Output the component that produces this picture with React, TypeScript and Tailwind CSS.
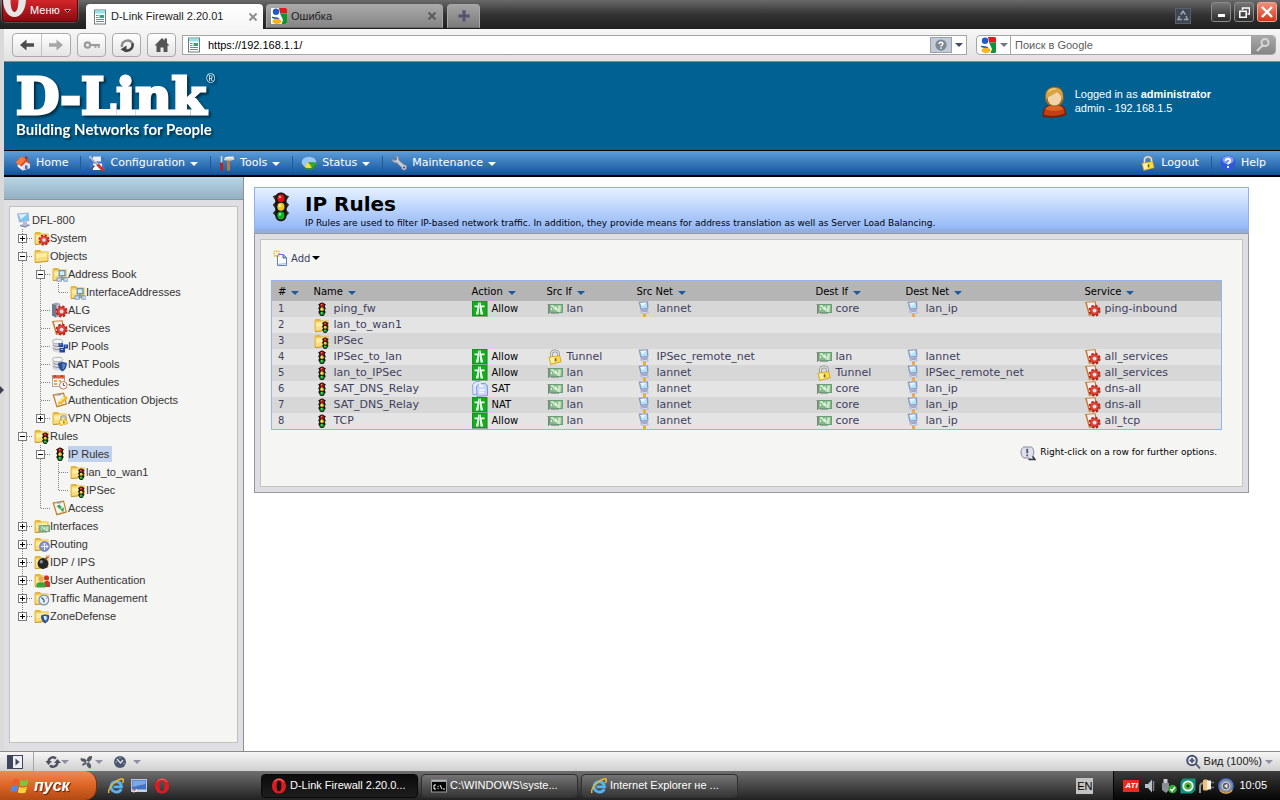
import type { ReactNode } from "react"

interface IconProps {
  className?: string;
  size?: number;
  children?: ReactNode;
}

const Icon = ({ className = "", size = 16, children }: IconProps) => (
  <svg className={`shrink-0 ${className}`} width={size} height={size} viewBox="0 0 16 16" fill="none" aria-hidden="true">
    {children}
  </svg>
)

/* ---- shapes shared by several icons ---- */

const FolderShape = () => (
  <>
    <path d="M0.5 3.5L1.5 2H6L7.5 3.5H14.5V13L2 15L0.5 14Z" fill="#e3b640" />
    <path d="M1.5 4.5L13.8 4L13.2 13L1.8 14.4Z" fill="#f9dc7c" />
    <path d="M2.5 6L13 5.2L12.8 8.5L2.4 10Z" fill="#fdeea6" />
    <path d="M1 14.6L14 13.2" stroke="#c4952c" strokeWidth="1" />
  </>
)

const GearShape = ({ transform = "" }: { transform?: string }) => (
  <g transform={transform}>
    <circle cx="8" cy="8" r="6.2" stroke="#b5241e" strokeWidth="2.6" strokeDasharray="2.9 1.97" />
    <circle cx="8" cy="8" r="5.8" fill="#c82a23" />
    <circle cx="7.6" cy="7.6" r="4.6" fill="#e0483d" />
    <circle cx="8" cy="8" r="2.4" fill="#dfe3f4" />
  </g>
)

const TrafficShape = ({ transform = "" }: { transform?: string }) => (
  <g transform={transform}>
    <path d="M5 1.5L3 2.2L5 5L3 6.8L5 9.6L3 11.4L5.5 14H10.5L13 11.4L11 9.6L13 6.8L11 5L13 2.2L11 1.5Z" fill="#33301f" />
    <rect x="4.6" y="0" width="6.8" height="16" rx="3" fill="#141410" />
    <circle cx="8" cy="3.2" r="2.2" fill="#cf1519" />
    <circle cx="8" cy="8" r="2.2" fill="#f2c328" />
    <circle cx="8" cy="12.8" r="2.2" fill="#10ad2a" />
    <circle cx="7.4" cy="2.6" r="0.8" fill="#ff8f8a" />
    <circle cx="7.4" cy="7.4" r="0.8" fill="#fff2a8" />
    <circle cx="7.4" cy="12.2" r="0.8" fill="#7df08c" />
  </g>
)

const LockShape = ({ transform = "" }: { transform?: string }) => (
  <g transform={transform}>
    <path d="M4.5 8V5C4.5 1 11.5 0.5 11.5 5V8" stroke="#8f8f8f" strokeWidth="2.8" />
    <path d="M4.5 8V5C4.5 1 11.5 0.5 11.5 5V8" stroke="#e4e4e0" strokeWidth="1.3" />
    <path d="M1.5 8L13 6.3L14.5 13L3.5 16Z" fill="#cf9c18" />
    <path d="M2.3 8.4L12.4 6.9L13.6 12.5L4.1 15Z" fill="#f7dc4b" />
    <path d="M3 9L8 8.3L8.8 13.2L4.5 14.2Z" fill="#fff3a0" />
    <path d="M8.5 9.3V12.4" stroke="#7c5a10" strokeWidth="1.6" />
  </g>
)

const ShieldShape = ({ transform = "" }: { transform?: string }) => (
  <g transform={transform}>
    <path d="M8 1L14.5 3C14.5 9 12.5 13 8 15.5C3.5 13 1.5 9 1.5 3Z" fill="#2a4f8f" />
    <path d="M8 3L12 4.5C12 9 11 11 8 13Z" fill="#5e8cd0" />
  </g>
)

const NicShape = ({ transform = "" }: { transform?: string }) => (
  <g transform={transform}>
    <path d="M0.5 3.5H1.5V13" stroke="#7f837f" strokeWidth="1" />
    <rect x="2" y="3" width="14" height="9" fill="#86b98d" />
    <rect x="2.5" y="3.5" width="13" height="8" stroke="#6a9f77" strokeWidth="1" />
    <path d="M4 5H6L8 8L9 5.5L9.5 9.5M4.5 7V9M11 5.5H13V8H11V10H13.5" stroke="#e0f4dc" strokeWidth="1.3" />
    <path d="M4 12.5H12" stroke="#9aa79c" strokeWidth="1" />
  </g>
)

const NetShape = ({ transform = "" }: { transform?: string }) => (
  <g transform={transform}>
    <rect x="3" y="1" width="8" height="7" fill="#d4ecfc" stroke="#5279b8" strokeWidth="1.4" />
    <path d="M7 8V11M3 13V11H12V13" stroke="#6a7fae" strokeWidth="1.4" />
    <rect x="0" y="11" width="6" height="4.5" fill="#bfe0f8" stroke="#6d82b0" />
    <rect x="9.5" y="11" width="6" height="4.5" fill="#bfe0f8" stroke="#6d82b0" />
  </g>
)

const ClipboardShape = () => (
  <>
    <path d="M0.5 2.5L12 0.5L15 12.5L4.5 15.5Z" fill="#bf8128" />
    <path d="M2.2 3.5L11.2 2L13.6 11.6L5.2 13.8Z" fill="#f4f5fb" />
    <path d="M4.5 2L9 1.2L9.3 3.2L5 3.8Z" fill="#9d9da8" />
  </>
)

const DatabaseShape = () => (
  <>
    <path d="M0.5 3.5V12.5C2 15 9 15 10.5 12.5V3.5Z" fill="#d9d9dd" />
    <ellipse cx="5.6" cy="3.5" rx="5" ry="2.2" fill="#f6f6f8" stroke="#9c9ca4" strokeWidth="0.8" />
    <path d="M0.8 6.8C3 9 9 9 10.5 6.8M0.8 10C3 12 9 12 10.5 10" stroke="#8f8f98" />
  </>
)

/* ---- complete icons ---- */

const FolderIcon = () => <Icon><FolderShape /></Icon>
const TrafficIcon = () => <Icon><TrafficShape transform="translate(1.6 1.5) scale(.8 .84)" /></Icon>
const TrafficFolderIcon = () => <Icon><FolderShape /><TrafficShape transform="translate(5.8 4.5) scale(.68 .72)" /></Icon>
const GearFolderIcon = () => <Icon><FolderShape /><GearShape transform="translate(4 4) scale(.75)" /></Icon>
const NetFolderIcon = () => <Icon><FolderShape /><NetShape transform="translate(5 4) scale(.72)" /></Icon>
const LockIcon = () => <Icon><LockShape /></Icon>
const LockFolderIcon = () => <Icon><FolderShape /><LockShape transform="translate(6 5) scale(.68)" /></Icon>
const NicIcon = () => <Icon><NicShape /></Icon>
const NicFolderIcon = () => <Icon><FolderShape /><NicShape transform="translate(4 5) scale(.75)" /></Icon>
const ZoneFolderIcon = () => (
  <Icon>
    <FolderShape />
    <ShieldShape transform="translate(6 5.5) scale(.64)" />
    <path d="M9.5 8H11.5C13.3 9 13 11 11.5 12H10.5Z" fill="#e2ecfa" />
  </Icon>
)

const ComputerIcon = () => (
  <Icon>
    <path d="M1 1.5L12.5 0.5L13.5 9L3 10.5Z" fill="#a9b3d3" />
    <path d="M2.5 2.5L11.5 1.8L12.3 7.8L4 9Z" fill="#6fc9f2" />
    <path d="M2.5 2.5L11.5 1.8L5 7.5Z" fill="#d3f2ff" />
    <path d="M7 10L11 9.5V11.5L14 13L9 15.5L3.5 13.5L7 11.8Z" fill="#b6b9d2" />
    <path d="M4 13.6L9 15L13.5 13.1" stroke="#777d9f" />
  </Icon>
)

const HostIcon = () => (
  <Icon>
    <path d="M1.5 0.8L11 0.3L11.5 7.5L3.5 9Z" fill="#8d96be" />
    <path d="M3.2 1.9L9.6 1.5L10.2 6.7L4.4 7.6Z" fill="#b5e5fc" />
    <path d="M3.2 1.9L9.6 1.5L5.5 5Z" fill="#f0fbff" />
    <path d="M4.5 8.8L10.8 8L11.5 12L7 13.3L3 11Z" fill="#a3a8cb" />
    <path d="M4.5 10.8L8 12L10.8 10.8" stroke="#e3e5f2" />
    <rect x="6" y="13" width="3" height="3" fill="#f2a93a" />
  </Icon>
)

const ServiceIcon = () => (
  <Icon>
    <path d="M0 1L10.5 0.3L13.5 13L4 15Z" fill="#c67a2b" />
    <path d="M1.8 1.8L9.5 1.3L12 12L5 13.4Z" fill="#f4f3f2" />
    <GearShape transform="translate(3.2 3.2) scale(.8)" />
  </Icon>
)

const AlgIcon = () => (
  <Icon>
    <path d="M0 2L4 0.5L8 1.5V14L4 15.5L0 13.5Z" fill="#a5a7b5" />
    <path d="M0 2L4 3V15.5L0 13.5Z" fill="#74788a" />
    <path d="M5 4H7M5 6H7" stroke="#e6e7ee" />
    <GearShape transform="translate(3.2 3) scale(.8)" />
  </Icon>
)

const IpPoolIcon = () => (
  <Icon>
    <DatabaseShape />
    <path d="M6.5 5H11V9H6.5ZM11.5 6.5H16V10.5H11.5ZM7.5 10H13V14.5H7.5Z" fill="#24489f" />
    <path d="M7.5 6H9.5M13 8H14.5M9 11.5H11" stroke="#a9c6f5" />
  </Icon>
)

const NatPoolIcon = () => <Icon><DatabaseShape /><ShieldShape transform="translate(5 5) scale(.68)" /></Icon>

const ScheduleIcon = () => (
  <Icon>
    <rect x="0.5" y="1.5" width="12" height="11" fill="#f7f7f8" stroke="#a8a8b0" />
    <rect x="0.5" y="1.5" width="12" height="3" fill="#e25b35" />
    <path d="M3 1V3M10 1V3" stroke="#7a3325" />
    <path d="M2 7H5M7 7H9M2 10H5" stroke="#f3a13a" strokeWidth="2" />
    <circle cx="11.3" cy="11.3" r="3.8" fill="#fdf8f4" stroke="#c97a4f" />
    <path d="M11.3 9V11.5H13" stroke="#5b4a92" />
  </Icon>
)

const AuthIcon = () => (
  <Icon>
    <ClipboardShape />
    <path d="M5.5 12.5L7 9L12 4L15 4.5L15.5 6.5L9.5 12Z" fill="#f2b61f" />
    <path d="M7.5 9.8L12.3 5.2" stroke="#fff09a" strokeWidth="1.3" />
  </Icon>
)

const AccessIcon = () => (
  <Icon>
    <ClipboardShape />
    <path d="M4.5 6L8 4.5L8.5 6L10 6.5L8 9.5ZM8.5 9L12 7.5L11.5 12L9.5 11Z" fill="#41aa47" />
  </Icon>
)

const RoutingIcon = () => (
  <Icon>
    <FolderShape />
    <circle cx="10.5" cy="10.5" r="4.8" fill="#8592cf" stroke="#6474b5" />
    <path d="M7 10.5H14M10.5 7V14M9 8.5L10.5 7L12 8.5M12.5 9L14 10.5L12.5 12" stroke="#f0f2ff" />
  </Icon>
)

const BombIcon = () => (
  <Icon>
    <FolderShape />
    <circle cx="9" cy="9.5" r="5.4" fill="#25252a" />
    <circle cx="7.3" cy="7.8" r="1.7" fill="#8b8b94" />
    <path d="M11.5 5.5L13.5 3" stroke="#6e5c40" strokeWidth="1.5" />
    <path d="M12 1.5L15.5 4M15.5 1L13 4" stroke="#e8793a" />
  </Icon>
)

const UsersIcon = () => (
  <Icon>
    <FolderShape />
    <circle cx="12.5" cy="6" r="2.5" fill="#c4342b" />
    <path d="M10 15V10.5C11 8.5 15 8.5 16 10.5V15Z" fill="#cf302c" />
    <circle cx="7" cy="7" r="2.8" fill="#e3ab5a" />
    <path d="M2.5 15.5V12C3.5 9.5 10.5 9.5 11.5 12V15.5Z" fill="#3aa53a" />
  </Icon>
)

const ClockFolderIcon = () => (
  <Icon>
    <FolderShape />
    <circle cx="9.8" cy="10" r="4.9" fill="#e6edf5" stroke="#7d94ad" strokeWidth="1.2" />
    <path d="M10 10L7.5 7.5M10 10V12.5" stroke="#2f5482" strokeWidth="1.2" />
    <path d="M12.5 8.5L13 9" stroke="#c2402e" />
  </Icon>
)

const AllowIcon = () => (
  <Icon>
    <rect x="0" y="0" width="16" height="16" fill="#8aa88b" />
    <rect x="0" y="0" width="15" height="15" fill="#0a9c14" />
    <rect x="1" y="1" width="13" height="13" fill="#17ab23" />
    <path d="M6.3 1.5L5.9 4.5H2.5V6.3H5.5L3.8 13.5H6.5L7.3 6.3V1.5ZM8.7 1.5L9.1 4.5H12.5V6.3H9.5L11.2 13.5H8.5L7.7 6.3V1.5Z" fill="#effcee" />
  </Icon>
)

const SatIcon = () => (
  <Icon>
    <path d="M0.5 3.5L4 0.5H8L9 3V12L1 14Z" fill="#e0e9fc" stroke="#8aa6e3" />
    <path d="M4.5 5.5L8 2.5H13.5L15.5 5V14.5L5 15.5Z" fill="#c5d6f9" stroke="#7f9ce0" />
    <path d="M8 1V5L11.5 5.5" stroke="#fff" strokeWidth="1.4" />
    <path d="M7 9H13M7 11.5H12" stroke="#f6f9ff" strokeWidth="1.6" />
  </Icon>
)

const NewDocIcon = () => (
  <Icon>
    <path d="M4.5 4.5H10.5L13.5 7.5V15.5H4.5Z" fill="#fafcff" stroke="#6480b0" />
    <path d="M10 4.5V8H13.5" fill="#8fafe2" stroke="#4e6ea8" />
    <path d="M5 14.5L13 13.5" stroke="#b5c8e8" strokeWidth="1.5" />
    <path d="M3.5 0V7.5M0 3.5H7.5M0.8 0.8L6.5 6.5M6.5 0.8L0.8 6.5" stroke="#eec02a" strokeWidth="1.2" />
    <circle cx="3.5" cy="3.5" r="1.8" fill="#fff6c0" />
  </Icon>
)

const TipIcon = () => (
  <Icon>
    <path d="M3.5 2H11.5C14.5 4.5 14.5 9.5 12 12L14.5 14.5H10L9 13H4C0 10.5 0 4.5 3.5 2Z" fill="#dfe0ea" stroke="#85879a" />
    <path d="M8.5 14.5H15L12.8 11.5" stroke="#303445" strokeWidth="1.4" />
    <path d="M7.2 3.8V8.3M7.2 9.6V11.2" stroke="#535979" strokeWidth="1.9" />
  </Icon>
)

const HouseIcon = () => (
  <Icon>
    <path d="M3 7L9 5L15 9V13L7.5 15.5L2.5 11.5Z" fill="#f7f1ee" />
    <path d="M7.5 15.5V10L10.5 7L15 9V13Z" fill="#d8dff0" />
    <path d="M0.5 7.5L6.5 1.5L11.5 4.5L15.8 9.2L11 7L6.5 11.5Z" fill="#d94b1f" />
    <path d="M0.5 7.5L6.5 1.5L11 4.2L5.3 10.2Z" fill="#f47b3d" />
    <path d="M10 1.5H12.5V5L10 3.8Z" fill="#a03423" />
    <rect x="10" y="10.5" width="2.5" height="3.5" fill="#4670b0" />
  </Icon>
)

const ConfigIcon = () => (
  <Icon>
    <path d="M1 1.5H13.5L15.5 3.5V15H3L1 13Z" fill="#3f74d0" />
    <rect x="4" y="1.5" width="8" height="5" fill="#e9eef8" />
    <rect x="4" y="8.5" width="9" height="6.5" fill="#f6f8fc" />
    <path d="M0.5 1.5L9.5 10.5" stroke="#dadde6" strokeWidth="2" />
    <path d="M1 2.5L9 10.5" stroke="#5b6271" strokeWidth="0.8" />
    <path d="M8.5 9.5L15 16" stroke="#d8321c" strokeWidth="3" />
    <path d="M1 15.5L5.5 10.5" stroke="#4d5563" strokeWidth="1.6" />
  </Icon>
)

const ToolsIcon = () => (
  <Icon>
    <path d="M2.5 1V8" stroke="#d5d9e2" strokeWidth="1.6" />
    <path d="M2.5 7.5V15.5" stroke="#b5261f" strokeWidth="3" />
    <path d="M9.5 5V15.5" stroke="#b97b3d" strokeWidth="3" />
    <path d="M5 5C5 2 8 1 14.5 1.5L15.5 4.5L12.5 5.5H7Z" fill="#d4d4d0" />
    <path d="M6 2.8L14 2.3" stroke="#fff" />
  </Icon>
)

const StatusIcon = () => (
  <Icon>
    <ellipse cx="8" cy="9.2" rx="7.5" ry="6" fill="#2f6bb3" />
    <ellipse cx="8" cy="7.3" rx="7.3" ry="5.6" fill="#9bc8f2" />
    <path d="M7 7L3.5 12C6 14.5 13 14 15.3 8.5Z" fill="#f4dc3c" />
    <path d="M7 7L15.3 7.3C15.5 11 13 13 11.5 13.2Z" fill="#31a83b" />
    <path d="M3.5 12C6 14.3 13 13.5 15.3 8.5V10.5C14 15.5 6 16 3.5 13.8Z" fill="#2d8b35" />
  </Icon>
)

const WrenchIcon = () => (
  <Icon>
    <path d="M1 3.5L3 5.5L5.5 4.5L5.5 2L3.5 0.5C6.5 0 8.5 2.5 7.8 5L13 9.5C15.5 9.5 16.5 12 15 14.5C13 16 10.5 15 10.5 12.5L5.5 7.7C2.8 8.3 0.5 6.3 1 3.5Z" fill="#c5c9d6" stroke="#6e7489" strokeWidth="0.8" />
    <circle cx="13" cy="12.5" r="1.1" fill="#3e5685" />
  </Icon>
)

const HelpIcon = () => (
  <Icon>
    <circle cx="8" cy="8" r="7.6" fill="#3059d8" />
    <ellipse cx="8" cy="5" rx="5.8" ry="4" fill="#7e9bf5" />
    <path d="M5.5 6C5.8 3 10.5 3 10.3 6C10.2 7.5 8 7.6 8 9.6M8 11V13" stroke="#fff" strokeWidth="1.8" />
  </Icon>
)

const UserIcon = () => (
  <svg className="shrink-0" width="25" height="32" viewBox="0 0 25 32" aria-hidden="true">
    <path d="M0.5 30.5C0 22 5 18 12.5 18C20 18 25 21 24 29C18 32 6 32.5 0.5 30.5Z" fill="#7d1e05" />
    <path d="M2 28.8C2 22 6 19 12.5 19C19 19 23 21.5 22.5 27.5C17 30.5 7 30.5 2 28.8Z" fill="#c23f12" />
    <path d="M3 23C5 20.5 8 19.5 12.5 19.5C17 19.5 20 20.5 21.5 23C16 25.5 8 25.5 3 23Z" fill="#dd6228" />
    <path d="M3.2 14C2.5 4 7 0.5 13 0.8C20 1 22 6 21.5 14C20.5 18.5 17 20.5 12.8 20.5C8.5 20.5 4.5 18.5 3.2 14Z" fill="#9c6a18" />
    <ellipse cx="12.5" cy="12.5" rx="6.8" ry="7" fill="#f2d2a8" />
    <path d="M4 12C3 4 8 1.6 13 1.8C18 2 21.5 5 20.8 13L19.5 14C19.5 9.5 18.5 7.5 15 5.5C13 8.5 8 10 5.5 11.5L5 14Z" fill="#d9a443" />
    <path d="M6.5 6C8 3.5 11 2.6 14 3" stroke="#f3d184" strokeWidth="1.2" fill="none" />
  </svg>
)

const PageIcon = () => (
  <Icon>
    <rect x="2.5" y="1" width="11" height="14" fill="#fff" stroke="#6f7c80" />
    <rect x="3" y="1.5" width="10" height="3" fill="#8ee4e6" />
    <rect x="7.5" y="6" width="4.5" height="3" fill="#3aa66b" />
    <path d="M4 6.5H6.5M4 8.5H6.5M4 10.5H12M4 12.5H12" stroke="#77888c" />
  </Icon>
)

const GoogleIcon = () => (
  <Icon>
    <rect x="0" y="0" width="16" height="16" rx="1" fill="#fff" />
    <path d="M8 0H15L16 1V5.5H9Z" fill="#dc1f1d" />
    <path d="M9 5.5H16V15L15 16H10.5L12 12Z" fill="#109239" />
    <circle cx="5" cy="3.8" r="3.2" fill="#205bc9" />
    <path d="M1 8.5C3 9.5 6 8.5 8.5 10.5L7 12C4.5 10.5 2 11 1 9.8Z" fill="#205bc9" />
    <ellipse cx="6" cy="13.3" rx="4.4" ry="2.6" fill="#f7b51c" />
  </Icon>
)

const OperaIcon = () => (
  <Icon>
    <path fillRule="evenodd" d="M8 0.5C12.5 0.5 15 4 15 8S12.5 15.5 8 15.5S1 12 1 8S3.5 0.5 8 0.5ZM8 2.8C6 2.8 5.6 5.5 5.6 8S6 13.2 8 13.2S10.4 10.5 10.4 8S10 2.8 8 2.8Z" fill="#df1b22" />
    <path d="M3.5 3.5C4.5 1.8 6 1.2 8 1.2C10 1.2 12 2 13 4" stroke="#ff7b78" />
  </Icon>
)

const IeIcon = () => (
  <Icon>
    <path d="M13.3 11.2C11 15.8 3 14.5 3 8.5C3 2.7 12.5 1.5 13.5 8.8H5.5" stroke="#55b4f2" strokeWidth="2.8" />
    <path d="M1 15C-1 11 7 2 14 0.8C16 1 15.5 3 14.5 5" stroke="#efb62c" strokeWidth="1.5" />
  </Icon>
)

const DesktopIcon = () => (
  <Icon>
    <rect x="0.5" y="1.5" width="15" height="12" fill="#4272c4" stroke="#b9c5d8" />
    <path d="M1.5 2.5H14.5V6L1.5 9Z" fill="#7ea7e5" />
    <rect x="1" y="11.5" width="14" height="2" fill="#d5d9e2" />
    <path d="M2 15L5.5 10.5L6 13Z" fill="#eef3fb" />
    <circle cx="3.5" cy="12" r="1" fill="#e3472c" />
  </Icon>
)

const ConsoleIcon = () => (
  <Icon>
    <rect x="0.5" y="2" width="15" height="12" fill="#050505" stroke="#9a9a9a" />
    <path d="M1 3H15" stroke="#cfd4de" strokeWidth="1.5" />
    <path d="M5 7H3V11H5M7 8V9M7 10V11M9 7L11 11M12 11H14" stroke="#fff" />
  </Icon>
)

const FlagIcon = () => (
  <Icon size={20}>
    <path d="M2.5 3C4.5 1.5 6 2 7.5 2.8L6.5 7.2C5 6.5 3.5 6.3 1.5 7.5Z" fill="#f05a2b" />
    <path d="M8.5 3C10.5 4 12.5 4 14.8 3L13.8 7.5C12 8.4 9.5 8.3 7.5 7.5Z" fill="#79c83c" />
    <path d="M1.3 8.5C3.2 7.2 4.8 7.5 6.3 8.2L5.3 12.8C3.5 12 2 12 0.2 13.2Z" fill="#4a8cf0" />
    <path d="M7.3 8.5C9.2 9.4 11.3 9.4 13.6 8.5L12.5 13.2C10.5 14 8.3 14 6.2 13.2Z" fill="#fbcf3b" />
  </Icon>
)

const Caret = ({ className = "" }: { className?: string }) => (
  <svg className={`shrink-0 ${className}`} width="8" height="4" viewBox="0 0 8 4" fill="currentColor" aria-hidden="true">
    <path d="M0 0H8L4 4Z" />
  </svg>
)

const CloseGlyph = ({ className = "" }: { className?: string }) => (
  <svg className={className} width="8" height="8" viewBox="0 0 8 8" stroke="currentColor" strokeWidth="2" aria-hidden="true">
    <path d="M0.5 0.5L7.5 7.5M7.5 0.5L0.5 7.5" />
  </svg>
)

/* ---- browser chrome ---- */

const TabBar = () => (
  <div className="flex h-[29px] items-start bg-gradient-to-b from-[#6a6a6a] via-[#333333] to-[#1f1f1f] pl-[2px]">
    <button className="flex h-[22px] w-[76px] items-center gap-1 overflow-hidden rounded-b-sm border border-t-0 border-[#5a0709] bg-gradient-to-b from-[#d3262b] to-[#8b0a10] text-[11px] text-white ring-1 ring-[#8d8d8d]/40">
      <svg className="-mt-1 shrink-0" width="23" height="18" viewBox="0 0 23 18" aria-hidden="true">
        <path fillRule="evenodd" d="M0 0H23C22.5 10 18 17 11.5 17S0.5 10 0 0ZM7.5 0C7.5 7 9 12 11.5 12S15.5 7 15.5 0Z" fill="#e6e6e6" />
      </svg>
      Меню
      <svg width="7" height="4" viewBox="0 0 7 4" stroke="#e08a8a" aria-hidden="true"><path d="M0.5 0.5H6.5L3.5 3.5Z" /></svg>
    </button>
    <div className="mt-1 ml-2 flex h-[25px] w-[177px] items-center rounded-t bg-gradient-to-b from-white to-[#f6f6f6] pr-[6px] pl-[6px] text-[11px] text-[#1c1c1c]">
      <PageIcon />
      <span className="ml-[3px] flex-1 truncate">D-Link Firewall 2.20.01</span>
      <button aria-label="Close D-Link tab"><CloseGlyph className="text-[#8f8f8f]" /></button>
    </div>
    <div className="mt-1 ml-[3px] flex h-6 w-[177px] items-center rounded-t border border-[#a8a8a8] border-b-[#6b6b6b] bg-gradient-to-b from-[#a9a9a9] to-[#858585] pr-[6px] pl-1 text-[11px] text-[#1c1c1c]">
      <GoogleIcon />
      <span className="ml-1 flex-1 truncate">Ошибка</span>
      <button aria-label="Close error tab"><CloseGlyph className="text-[#5a5a5a]" /></button>
    </div>
    <button aria-label="New tab" className="mt-1 ml-1 flex h-6 w-[33px] items-center justify-center rounded-t border border-[#a8a8a8] border-b-[#6b6b6b] bg-gradient-to-b from-[#a3a3a3] to-[#7c7c7c]">
      <svg width="12" height="12" viewBox="0 0 12 12" aria-hidden="true"><path d="M4.5 0.5H7.5V4.5H11.5V7.5H7.5V11.5H4.5V7.5H0.5V4.5H4.5Z" fill="#50556a" stroke="#6d7183" /></svg>
    </button>
    <div className="ml-auto flex items-start pr-[3px]">
      <button aria-label="Closed tabs" className="mt-2 mr-5 flex size-4 items-center justify-center border border-[#566072] bg-[#3f4652]">
        <Icon size={12}>
          <path d="M5 6L8 1.5L11 6M3.5 8L1.5 12.5H6.5M9 12.5H14L12 8" stroke="#9aa3b0" strokeWidth="2" />
        </Icon>
      </button>
      <div className="mt-[2px] flex gap-[3px]">
        <button aria-label="Minimize" className="flex size-5 items-end justify-center rounded-[3px] border border-[#8b8b8b] bg-gradient-to-b from-[#777777] to-[#2c2c2c] pb-1">
          <span className="h-[3px] w-[7px] bg-white" />
        </button>
        <button aria-label="Restore" className="flex size-5 items-center justify-center rounded-[3px] border border-[#8b8b8b] bg-gradient-to-b from-[#777777] to-[#2c2c2c]">
          <svg width="11" height="11" viewBox="0 0 11 11" stroke="#fff" fill="none" aria-hidden="true">
            <path d="M3.5 3V1H10.5V7H8.5" strokeWidth="1.4" />
            <path d="M0.8 4.2H7.2V10.2H0.8Z" strokeWidth="1.5" />
          </svg>
        </button>
        <button aria-label="Close window" className="flex size-5 items-center justify-center rounded-[3px] border border-[#f0a797] bg-gradient-to-b from-[#ee8e78] to-[#d62f14]">
          <svg width="12" height="12" viewBox="0 0 12 12" stroke="#fff" strokeWidth="2.4" aria-hidden="true"><path d="M1 1L11 11M11 1L1 11" /></svg>
        </button>
      </div>
    </div>
  </div>
)

const toolButton = "flex h-6 w-[29px] items-center justify-center rounded border border-[#aaaaaa] bg-gradient-to-b from-white to-[#e4e4e4]"

const AddressBar = () => (
  <div className="flex h-[33px] items-center gap-[6px] border-b border-[#8a8a8a] bg-gradient-to-b from-[#f6f6f6] to-[#e2e2e2] pr-1 pl-2">
    <div className="flex h-6 rounded border border-[#aaaaaa] bg-gradient-to-b from-white to-[#e4e4e4]">
      <button aria-label="Back" className="flex w-[29px] items-center justify-center border-r border-[#c4c4c4]">
        <Icon><path d="M1 8L7.5 2.5V6.3H15V9.7H7.5V13.5Z" fill="#4c4c4c" /></Icon>
      </button>
      <button aria-label="Forward" className="flex w-7 items-center justify-center">
        <Icon><path d="M15 8L8.5 2.5V6.3H1V9.7H8.5V13.5Z" fill="#a6a6a6" /></Icon>
      </button>
    </div>
    <button aria-label="Log in" className={toolButton}>
      <Icon size={18}>
        <circle cx="4" cy="8" r="2.4" stroke="#9b9b9b" strokeWidth="2" />
        <path d="M6.5 8H15M11 8V10.5M14 8V10.5" stroke="#9b9b9b" strokeWidth="1.8" />
      </Icon>
    </button>
    <button aria-label="Reload" className={toolButton}>
      <Icon>
        <path d="M3 10A5.6 5.6 0 0 1 13.3 6.2" stroke="#8b8b8b" strokeWidth="2.4" />
        <path d="M13.3 6.2A5.6 5.6 0 0 1 5.5 13" stroke="#454545" strokeWidth="2.6" />
        <path d="M7.5 8.5V15.5L1.5 12.5Z" fill="#454545" />
      </Icon>
    </button>
    <button aria-label="Home page" className={toolButton}>
      <Icon><path d="M8 1L10.5 3.5V1.5H13V6L15.5 8.5H13.5V15H9.5V10.5H6.5V15H2.5V8.5H0.5Z" fill="#555555" /></Icon>
    </button>
    <div className="flex h-5 flex-1 items-center border border-[#a5a5a5] bg-white pr-[3px] pl-[3px]">
      <PageIcon />
      <input aria-label="Address" defaultValue="https://192.168.1.1/" className="ml-[6px] min-w-0 flex-1 bg-transparent text-[11px] text-black outline-none" />
      <button aria-label="Site security" className="flex h-4 w-[22px] items-center justify-center border border-[#97a1b0] bg-[#c3ccd6]">
        <Icon size={12}>
          <circle cx="8" cy="8" r="7.5" fill="#7f8994" />
          <path d="M5.5 6.5C5.5 3.5 10.5 3.5 10.5 6.3C10.5 8 8 8 8 10M8 11.3V13" stroke="#fff" strokeWidth="2" />
        </Icon>
      </button>
      <button aria-label="Address history" className="ml-[3px]"><Caret className="text-[#3f4d63]" /></button>
    </div>
    <div className="ml-[3px] flex h-5 w-[300px] items-center rounded border border-[#a5a5a5] bg-white">
      <button aria-label="Search engine" className="flex h-full w-[34px] items-center gap-1 border-r border-[#a5a5a5] pl-[3px]">
        <GoogleIcon />
        <Caret className="text-[#73768a]" />
      </button>
      <input aria-label="Search" placeholder="Поиск в Google" className="min-w-0 flex-1 bg-transparent pl-1 text-[11px] outline-none placeholder:text-[#5c5c5c]" />
      <button aria-label="Start search" className="flex h-full w-6 items-center justify-center rounded-r-[3px] bg-gradient-to-b from-[#a9a9a9] to-[#858585]">
        <Icon>
          <circle cx="10" cy="5.5" r="3.5" stroke="#d6d6d6" strokeWidth="2" />
          <path d="M7.5 8.5L2 14" stroke="#d6d6d6" strokeWidth="2.2" />
        </Icon>
      </button>
    </div>
  </div>
)

/* ---- firewall page ---- */

const Banner = () => (
  <header className="flex h-[88px] items-start justify-between bg-[#006192] text-white">
    <div className="pt-[11px] pl-3 drop-shadow-[2px_2px_1px_#002d45]">
      <div className="flex items-start">
        <span className="font-['DejaVu_Serif',serif] text-[50px] leading-[48px] font-bold [-webkit-text-stroke:3px_white]">D-Link</span>
        <span className="text-[12px] leading-3">®</span>
      </div>
      <div className="font-['Lato',sans-serif] text-[15px] leading-4 font-bold">Building Networks for People</div>
    </div>
    <div className="mt-6 mr-[69px] flex gap-2 text-[11px]">
      <UserIcon />
      <div className="pt-px leading-[14px]">
        <div>Logged in as <b>administrator</b></div>
        <div>admin - 192.168.1.5</div>
      </div>
    </div>
  </header>
)

const menus = [
  { label: "Home", icon: <HouseIcon />, caret: false },
  { label: "Configuration", icon: <ConfigIcon />, caret: true },
  { label: "Tools", icon: <ToolsIcon />, caret: true },
  { label: "Status", icon: <StatusIcon />, caret: true },
  { label: "Maintenance", icon: <WrenchIcon />, caret: true },
]

const NavBar = () => (
  <nav className="flex h-[27px] items-center border-y border-b-2 border-black bg-gradient-to-b from-[#5c9ddb] to-[#0d549a] pl-[3px] font-['DejaVu_Sans',sans-serif] text-[11px] text-white">
    {menus.map((menu, index) => (
      <div key={menu.label} className="flex items-center">
        {index > 0 && <span className="h-[14px] w-px bg-[#1f5b98]" />}
        <a href="#" className="flex items-center gap-[5px] pr-3 pl-2">
          {menu.icon}
          <span>{menu.label}</span>
          {menu.caret && <Caret className="mt-[2px]" />}
        </a>
      </div>
    ))}
    <div className="ml-auto flex items-center pr-[14px]">
      <a href="#" className="flex items-center gap-[5px] pr-3"><LockIcon />Logout</a>
      <span className="h-[14px] w-px bg-[#1f5b98]" />
      <a href="#" className="flex items-center gap-[5px] pl-2"><HelpIcon />Help</a>
    </div>
  </nav>
)

/* One cell per tree level: "line" passes by, "tee" and "end" branch, "plus" and "minus" carry the toggle. */
type Branch = "line" | "tee" | "end" | "plus" | "minus" | "plusEnd";

interface TreeNode {
  label: string;
  icon: ReactNode;
  branches: Branch[];
  selected?: boolean;
}

const tree: TreeNode[] = [
  { label: "DFL-800", icon: <ComputerIcon />, branches: [] },
  { label: "System", icon: <GearFolderIcon />, branches: ["plus"] },
  { label: "Objects", icon: <FolderIcon />, branches: ["minus"] },
  { label: "Address Book", icon: <NetFolderIcon />, branches: ["line", "minus"] },
  { label: "InterfaceAddresses", icon: <NetFolderIcon />, branches: ["line", "line", "end"] },
  { label: "ALG", icon: <AlgIcon />, branches: ["line", "tee"] },
  { label: "Services", icon: <ServiceIcon />, branches: ["line", "tee"] },
  { label: "IP Pools", icon: <IpPoolIcon />, branches: ["line", "tee"] },
  { label: "NAT Pools", icon: <NatPoolIcon />, branches: ["line", "tee"] },
  { label: "Schedules", icon: <ScheduleIcon />, branches: ["line", "tee"] },
  { label: "Authentication Objects", icon: <AuthIcon />, branches: ["line", "tee"] },
  { label: "VPN Objects", icon: <LockFolderIcon />, branches: ["line", "plusEnd"] },
  { label: "Rules", icon: <TrafficFolderIcon />, branches: ["minus"] },
  { label: "IP Rules", icon: <TrafficIcon />, branches: ["line", "minus"], selected: true },
  { label: "lan_to_wan1", icon: <TrafficFolderIcon />, branches: ["line", "line", "tee"] },
  { label: "IPSec", icon: <TrafficFolderIcon />, branches: ["line", "line", "end"] },
  { label: "Access", icon: <AccessIcon />, branches: ["line", "end"] },
  { label: "Interfaces", icon: <NicFolderIcon />, branches: ["plus"] },
  { label: "Routing", icon: <RoutingIcon />, branches: ["plus"] },
  { label: "IDP / IPS", icon: <BombIcon />, branches: ["plus"] },
  { label: "User Authentication", icon: <UsersIcon />, branches: ["plus"] },
  { label: "Traffic Management", icon: <ClockFolderIcon />, branches: ["plus"] },
  { label: "ZoneDefense", icon: <ZoneFolderIcon />, branches: ["plusEnd"] },
]

const BranchCell = ({ branch, label }: { branch: Branch; label: string }) => {
  const ends = branch === "end" || branch === "plusEnd"
  const toggle = branch === "plus" || branch === "minus" || branch === "plusEnd"
  const drawing = (
    <svg className="block" width="18" height="18" viewBox="0 0 18 18" fill="none" aria-hidden="true">
      <path d={ends ? "M6.5 0V9" : "M6.5 0V18"} stroke="#808080" strokeDasharray="1 1" />
      {branch !== "line" && <path d="M7 9.5H17" stroke="#808080" strokeDasharray="1 1" />}
      {toggle && <rect x="2.5" y="5.5" width="8" height="8" fill="#fff" stroke="#7a7a7a" />}
      {toggle && <path d={branch === "minus" ? "M4 9.5H9" : "M4 9.5H9M6.5 7V12"} stroke="#000" />}
    </svg>
  )
  return toggle ? <button aria-label={`Toggle ${label}`}>{drawing}</button> : drawing
}

const Sidebar = () => (
  <aside className="flex w-60 shrink-0 flex-col border-r border-[#8f8f96] bg-[#dedee3]">
    <div className="h-[23px] border-b border-[#8e9499] bg-gradient-to-b from-[#b9d5e6] to-[#93b1c1]" />
    <div className="mx-[5px] mt-[6px] mb-2 flex-1 border border-[#c2c2ba] bg-[#f5f5f3] pt-1 pl-[6px]">
      <ul className="text-[11px] text-[#333333]">
        {tree.map((node) => (
          <li key={node.label} className="flex h-[18px] items-center">
            {node.branches.map((branch, index) => (
              <BranchCell key={index} branch={branch} label={node.label} />
            ))}
            {node.icon}
            <a href="#" className={node.selected ? "bg-[#c1d2ee] pr-[3px] leading-4" : "leading-4"}>{node.label}</a>
          </li>
        ))}
      </ul>
    </div>
  </aside>
)

interface Rule {
  name: string;
  folder?: boolean;
  action?: string;
  srcIf?: string;
  srcNet?: string;
  destIf?: string;
  destNet?: string;
  service?: string;
}

const rules: Rule[] = [
  { name: "ping_fw", action: "Allow", srcIf: "lan", srcNet: "lannet", destIf: "core", destNet: "lan_ip", service: "ping-inbound" },
  { name: "lan_to_wan1", folder: true },
  { name: "IPSec", folder: true },
  { name: "IPSec_to_lan", action: "Allow", srcIf: "Tunnel", srcNet: "IPSec_remote_net", destIf: "lan", destNet: "lannet", service: "all_services" },
  { name: "lan_to_IPSec", action: "Allow", srcIf: "lan", srcNet: "lannet", destIf: "Tunnel", destNet: "IPSec_remote_net", service: "all_services" },
  { name: "SAT_DNS_Relay", action: "SAT", srcIf: "lan", srcNet: "lannet", destIf: "core", destNet: "lan_ip", service: "dns-all" },
  { name: "SAT_DNS_Relay", action: "NAT", srcIf: "lan", srcNet: "lannet", destIf: "core", destNet: "lan_ip", service: "dns-all" },
  { name: "TCP", action: "Allow", srcIf: "lan", srcNet: "lannet", destIf: "core", destNet: "lan_ip", service: "all_tcp" },
]

const columns = [
  { label: "#", width: "w-[36px]" },
  { label: "Name", width: "w-[158px]" },
  { label: "Action", width: "w-[75px]" },
  { label: "Src If", width: "w-[90px]" },
  { label: "Src Net", width: "w-[179px]" },
  { label: "Dest If", width: "w-[90px]" },
  { label: "Dest Net", width: "w-[179px]" },
  { label: "Service", width: "" },
]

const Cell = ({ icon, text }: { icon: ReactNode; text?: string }) => (
  <td className="p-0 pl-[6px]">
    {text && (
      <a href="#" className="flex h-4 items-center gap-1 whitespace-nowrap">{icon}{text}</a>
    )}
  </td>
)

const interfaceIcon = (name?: string) => (name === "Tunnel" ? <LockIcon /> : <NicIcon />)

const RulesTable = () => (
  <table className="w-full table-fixed border-collapse border border-[#93b3f3] text-[11px] leading-4 text-[#3f3f5f]">
    <thead>
      <tr className="h-5 bg-[#b5b5b5] text-[10px] text-black">
        {columns.map((column) => (
          <th key={column.label} className={`p-0 pt-[2px] pl-[6px] text-left font-normal ${column.width}`}>
            <button className="flex items-center gap-[5px]">
              {column.label}
              <Caret className="mt-[3px] text-[#1c5a9c]" />
            </button>
          </th>
        ))}
      </tr>
    </thead>
    <tbody>
      {rules.map((rule, index) => (
        <tr key={index} className="h-4 odd:bg-[#d7d7d7] even:bg-[#e4e4e4]">
          <td className="p-0 pl-[6px] text-[10px]">{index + 1}</td>
          <Cell icon={rule.folder ? <TrafficFolderIcon /> : <TrafficIcon />} text={rule.name} />
          <td className="p-0 pl-[6px] text-[10px] text-black">
            {rule.action && (
              <span className="flex h-4 items-center gap-1">
                {rule.action === "SAT" ? <SatIcon /> : <AllowIcon />}
                {rule.action}
              </span>
            )}
          </td>
          <Cell icon={interfaceIcon(rule.srcIf)} text={rule.srcIf} />
          <Cell icon={<HostIcon />} text={rule.srcNet} />
          <Cell icon={interfaceIcon(rule.destIf)} text={rule.destIf} />
          <Cell icon={<HostIcon />} text={rule.destNet} />
          <Cell icon={<ServiceIcon />} text={rule.service} />
        </tr>
      ))}
    </tbody>
  </table>
)

const RulesPanel = () => (
  <main className="min-w-0 flex-1 bg-white pt-[10px] pr-[31px] pl-[10px] font-['DejaVu_Sans',sans-serif]">
    <div className="flex h-[46px] items-start border border-b-4 border-[#8fb0f5] border-b-[#96aede] bg-gradient-to-b from-[#e6f1ff] to-[#93b7f7] pl-[10px]">
      <svg className="mt-1 shrink-0" width="32" height="32" viewBox="0 0 16 16" fill="none" aria-hidden="true">
        <TrafficShape transform="translate(1.4 .2) scale(.82 .9)" />
      </svg>
      <div className="pl-2 text-black">
        <h1 className="pt-1 text-[20px] leading-[25px] font-bold">IP Rules</h1>
        <p className="text-[9px] leading-3">
          IP Rules are used to filter IP-based network traffic. In addition, they provide means for address translation as well as Server Load Balancing.
        </p>
      </div>
    </div>
    <div className="border border-[#98989e] bg-[#dedee2] p-[5px]">
      <div className="border border-[#c4c4ba] bg-[#f5f5f3] pt-[10px] pr-5 pb-[25px] pl-[10px]">
        <button className="ml-[2px] flex h-4 items-center gap-[2px] text-[10px] text-[#3f3f5f]">
          <NewDocIcon />
          Add
          <Caret className="text-black" />
        </button>
        <div className="pt-[14px]">
          <RulesTable />
        </div>
        <div className="mt-[15px] flex items-center justify-end gap-1 pr-[5px] text-[9px] text-black">
          <TipIcon />
          Right-click on a row for further options.
        </div>
      </div>
    </div>
  </main>
)

/* ---- bottom bars ---- */

const StatusBar = () => (
  <div className="flex h-5 items-center border-t border-[#8a8a8a] bg-gradient-to-b from-[#f6f6f6] to-[#d0d0d0] text-[11px] text-[#222222]">
    <button aria-label="Panels" className="ml-[7px]">
      <Icon>
        <rect x="0.5" y="1.5" width="15" height="13" fill="#eceef3" stroke="#3d455c" />
        <rect x="1" y="2" width="5" height="12" fill="#3d455c" />
        <path d="M8.5 4.5L12.5 8L8.5 11.5Z" fill="#3d455c" />
      </Icon>
    </button>
    <span className="ml-[10px] h-full w-px bg-[#a6a6a6]" />
    <button aria-label="Synchronize" className="ml-[11px] flex items-center">
      <Icon>
        <path d="M3.5 8A4.5 4.5 0 0 1 11 4.5M12.5 8A4.5 4.5 0 0 1 5 11.5" stroke="#4b5161" strokeWidth="2.4" />
        <path d="M0.5 7H7L3.5 11ZM9 9L12.5 5L16 9Z" fill="#4b5161" />
      </Icon>
      <Caret className="text-[#8d92a3]" />
    </button>
    <button aria-label="Turbo" className="ml-[10px] flex items-center">
      <Icon>
        <path d="M7 8C4 8.5 1 7 1.5 4.5C4.5 4 7 5 8 7C7.5 4 9.5 1.5 13 2C13.5 5 11.5 7.5 9 8C11.5 9 13 11.5 11.5 14.5C8.5 14 7 11.5 8 9C6.5 11 5 11.5 3 11.5C3 9.5 5 8.5 7 8Z" fill="#565b69" />
        <circle cx="8" cy="8" r="1" fill="#e3e4e8" />
      </Icon>
      <Caret className="text-[#8d92a3]" />
    </button>
    <button aria-label="Speed" className="ml-[9px] flex items-center gap-[5px]">
      <Icon>
        <circle cx="8" cy="8" r="6" fill="#4b5670" />
        <path d="M5 5L8.5 9L11 6" stroke="#e2e6ef" strokeWidth="1.2" />
        <path d="M3.5 8H5M8 3V4.5M11.5 9.5H12.5" stroke="#c3c8d4" />
      </Icon>
      <Caret className="text-[#8d92a3]" />
    </button>
    <button className="mr-[7px] ml-auto flex items-center gap-[3px]">
      <Icon>
        <circle cx="7" cy="6.5" r="4.8" fill="#eef0f5" stroke="#4a536d" strokeWidth="2" />
        <path d="M4.5 6.5H9.5M7 4V9M11 10L15 14.5" stroke="#4a536d" strokeWidth="1.8" />
      </Icon>
      Вид (100%)
      <Caret className="text-[#8d92a3]" />
    </button>
  </div>
)

const taskButton = "flex h-6 w-[157px] items-center gap-[3px] rounded-sm border px-[9px] text-[11px] text-white"

const Taskbar = () => (
  <footer className="flex h-[29px] items-center bg-gradient-to-b from-[#6f6f6f] via-[#484848] to-[#222222]">
    <button className="flex h-full w-[97px] items-center gap-1 rounded-r-xl border-r border-[#7d2b0b] bg-gradient-to-b from-[#f08a52] via-[#dd6425] to-[#b24a14] pl-[10px] text-[16px] font-bold text-white italic [text-shadow:1px_1px_1px_#5a2208]">
      <FlagIcon />
      пуск
    </button>
    <div className="ml-[11px] flex gap-[7px]">
      <button aria-label="Internet Explorer"><IeIcon /></button>
      <button aria-label="Show desktop"><DesktopIcon /></button>
      <button aria-label="Opera"><OperaIcon /></button>
    </div>
    <div className="ml-[91px] flex gap-[3px]">
      <button className={`${taskButton} border-[#080808] bg-gradient-to-b from-[#0c0c0c] to-[#1d1d1d]`}>
        <OperaIcon /><span className="truncate">D-Link Firewall 2.20.0...</span>
      </button>
      <button className={`${taskButton} border-[#2f2f2f] bg-gradient-to-b from-[#757575] to-[#353535]`}>
        <ConsoleIcon /><span className="truncate">C:\WINDOWS\syste...</span>
      </button>
      <button className={`${taskButton} border-[#2f2f2f] bg-gradient-to-b from-[#757575] to-[#353535]`}>
        <IeIcon /><span className="truncate">Internet Explorer не ...</span>
      </button>
    </div>
    <button className="mr-5 ml-auto bg-[#c3c3c3] px-px text-[11px] leading-4 text-black">EN</button>
    <div className="flex h-full items-center gap-[3px] border-l border-black bg-gradient-to-b from-[#3c3c3c] to-[#060606] pr-[13px] pl-[9px] text-[11px] text-white">
      <span className="flex h-3 w-4 items-center justify-center bg-[#f0281c] text-[8px] font-bold italic">ATI</span>
      <Icon>
        <path d="M3 6H6L10 1.5V14.5L6 10H3Z" fill="#b9bfc4" />
        <path d="M11.5 3V13" stroke="#7d8489" strokeWidth="1.5" />
      </Icon>
      <Icon>
        <path d="M1 5H8V12L5 15L1 12Z" fill="#8b8e93" />
        <rect x="2.5" y="1" width="4" height="4" fill="#c9ccd1" />
        <circle cx="11.5" cy="11" r="4.3" fill="#32a52e" />
        <path d="M9.3 11L11 13L14 9" stroke="#fff" strokeWidth="1.4" />
      </Icon>
      <Icon>
        <path d="M3 0.5H15.5V12L12 15.5H0.5V4Z" fill="#12937c" />
        <circle cx="8" cy="8" r="5.6" fill="#fff" />
        <circle cx="8" cy="8" r="3.8" fill="#4dbb35" />
        <circle cx="8" cy="8" r="1.5" fill="#083b16" />
      </Icon>
      <Icon>
        <path d="M1 15V9C1 6 2 5 5 5" stroke="#8d8d8d" strokeWidth="2" />
        <rect x="4" y="1.5" width="5" height="11" rx="1.5" fill="#f0c27a" />
        <rect x="8" y="2.5" width="4" height="9" fill="#f6f1e6" />
        <path d="M12 4.5H15M12 9.5H15" stroke="#777" strokeWidth="1.5" />
      </Icon>
      <Icon>
        <circle cx="8" cy="8" r="7" fill="#8a8f99" stroke="#4e79d9" strokeWidth="1.6" />
        <path d="M2 12C4 16 12 16 14 12" stroke="#e79a32" strokeWidth="1.6" />
        <circle cx="8" cy="8" r="4" fill="#5b606a" stroke="#d8dbe1" />
        <path d="M6 8L9.5 5.5V10.5Z" fill="#e5e7eb" />
      </Icon>
      <time className="ml-[2px]">10:05</time>
    </div>
  </footer>
)

const App = () => {
  return (
    <div className="flex min-h-screen flex-col font-['Liberation_Sans',Arial,sans-serif]">
      <TabBar />
      <div className="flex flex-1">
        <div className="flex w-1 shrink-0 items-center bg-[#dadada]">
          <svg width="4" height="8" viewBox="0 0 4 8" aria-hidden="true"><path d="M0 0L4 4L0 8Z" fill="#3c4252" /></svg>
        </div>
        <div className="flex min-w-0 flex-1 flex-col">
          <AddressBar />
          <Banner />
          <NavBar />
          <div className="flex flex-1">
            <Sidebar />
            <RulesPanel />
          </div>
        </div>
      </div>
      <StatusBar />
      <Taskbar />
    </div>
  )
}

export default App
